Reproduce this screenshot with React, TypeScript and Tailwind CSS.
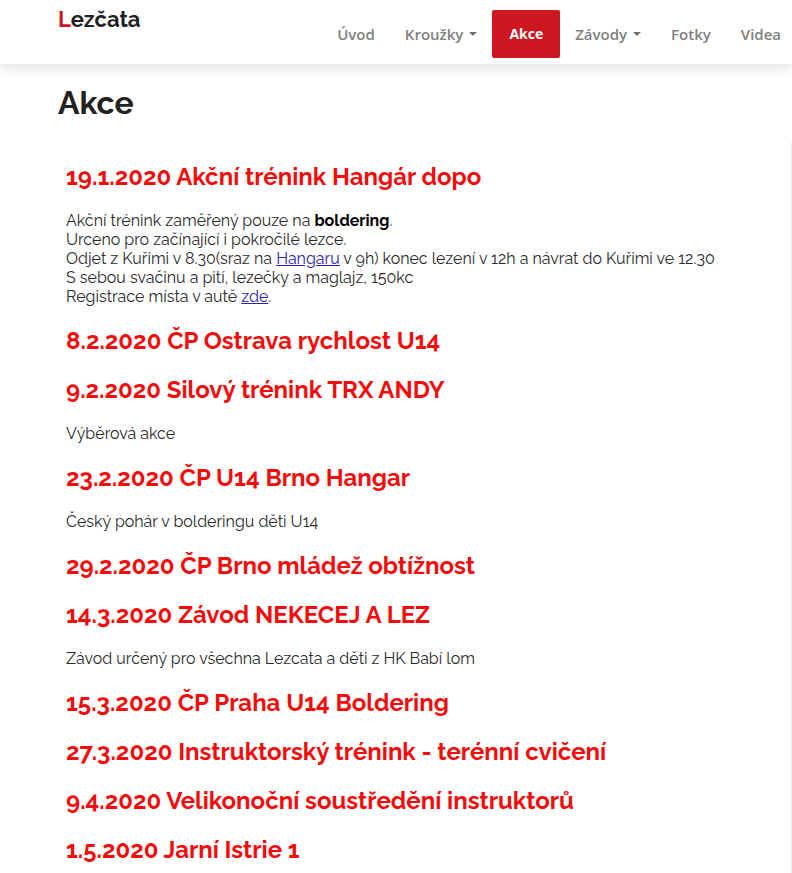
import type { ReactNode } from "react";

type Entry = { title: string; body?: ReactNode };

const linkStyle = "text-[#2a1db5] underline";

const events: Entry[] = [
  {
    title: "19.1.2020 Akční trénink Hangár dopo",
    body: (
      <>
        Akční trénink zaměřený pouze na <b className="font-bold text-black">boldering</b>.<br />
        Urceno pro začínající i pokročilé lezce.<br />
        Odjet z Kuřimi v 8.30(sraz na <a href="#hangar" className={linkStyle}>Hangaru</a> v 9h) konec lezení v 12h a návrat do Kuřimi ve 12.30<br />
        S sebou svačinu a pití, lezečky a maglajz, 150kc<br />
        Registrace místa v autě <a href="#zde" className={linkStyle}>zde</a>.
      </>
    ),
  },
  { title: "8.2.2020 ČP Ostrava rychlost U14" },
  { title: "9.2.2020 Silový trénink TRX ANDY", body: "Výběrová akce" },
  { title: "23.2.2020 ČP U14 Brno Hangar", body: "Český pohár v bolderingu děti U14" },
  { title: "29.2.2020 ČP Brno mládež obtížnost" },
  { title: "14.3.2020 Závod NEKECEJ A LEZ", body: "Závod určený pro všechna Lezcata a děti z HK Babí lom" },
  { title: "15.3.2020 ČP Praha U14 Boldering" },
  { title: "27.3.2020 Instruktorský trénink - terénní cvičení" },
  { title: "9.4.2020 Velikonoční soustředění instruktorů" },
  { title: "1.5.2020 Jarní Istrie 1" },
];

const links = [
  { label: "Úvod" },
  { label: "Kroužky", menu: true },
  { label: "Akce", active: true },
  { label: "Závody", menu: true },
  { label: "Fotky" },
  { label: "Videa" },
];

export default function App() {
  return (
    <div className="bg-white font-['Raleway','Lato','Liberation_Sans',sans-serif]">
      <header className="flex h-16 items-start justify-between pr-[11px] pl-[58px] shadow-[0_0_16px_rgba(0,0,0,0.18)]">
        <a href="#home" className="pt-1 text-[22px] leading-[30px] font-bold text-[#222]">
          <span className="text-[#ce1620]">L</span>ezčata
        </a>
        <nav className="flex gap-[30px] pt-[10px] font-['Open_Sans',sans-serif] text-[15px] font-semibold text-[#808080]">
          {links.map((l) => (
            <a
              key={l.label}
              href={`#${l.label}`}
              className={
                l.active
                  ? "-mx-[15px] flex h-12 items-center rounded-xs bg-[#ce1620] px-[17px] text-sm font-bold text-white"
                  : "flex h-12 items-center gap-[6px]"
              }
            >
              {l.label}
              {l.menu && <span className="border-x-4 border-t-4 border-x-transparent border-t-[#707070]" />}
            </a>
          ))}
        </nav>
      </header>
      <main className="pl-[58px]">
        <h1 className="pt-5 text-[32px] leading-[38px] font-bold text-[#222]">Akce</h1>
        <div className="mt-5 border-r border-[#eee] pt-5 pl-2">
          {events.map((e) => (
            <section key={e.title} className="flow-root">
              <h2 className="mb-5 text-2xl leading-[29px] font-bold text-[#f20c0c]">{e.title}</h2>
              {e.body && <p className="mb-5 text-base leading-[19px] text-[#2a2a2a]">{e.body}</p>}
            </section>
          ))}
        </div>
      </main>
    </div>
  );
}
